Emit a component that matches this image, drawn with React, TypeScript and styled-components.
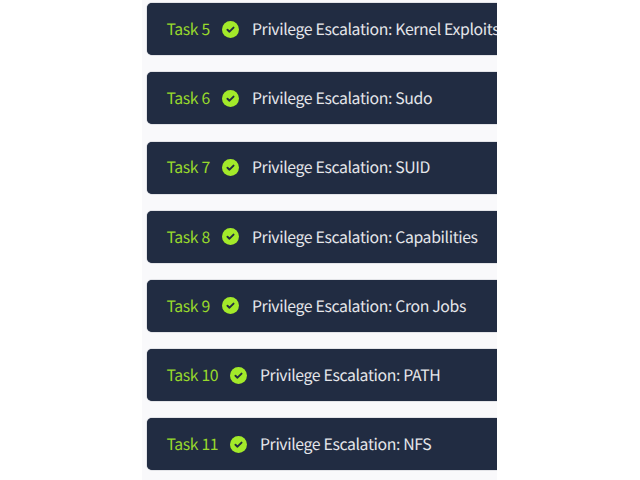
import React from "react";
import styled, { createGlobalStyle } from "styled-components";

const Global = createGlobalStyle`
  * { box-sizing: border-box; }
  body { margin: 0; background: #fff; overflow: hidden; }
`;
const Page = styled.main`
  width: 355px;
  height: 480px;
  margin-left: 142px;
  padding: 3.2px 0 0 5.2px;
  background: #f9f9fb;
  overflow: hidden;
  display: flex;
  flex-direction: column;
  gap: 17.2px;
  font-family: "Noto Sans CJK SC", "Noto Sans CJK JP", sans-serif;
  font-size: 15.8px;
  letter-spacing: -0.36px;
  text-rendering: geometricPrecision;
`;
const Row = styled.article`
  flex: none;
  display: flex;
  align-items: center;
  width: 360px;
  height: 52px;
  padding-left: 19.3px;
  border-radius: 5px;
  background: #212c42;
  box-shadow: 0 0 1px #212c42;
  white-space: nowrap;
`;
const Label = styled.span<{ $w: number }>`
  flex: none;
  width: ${(p) => p.$w}px;
  padding-bottom: 1.2px;
  color: #98d92c;
`;
const Check = styled.svg`
  flex: none;
  width: 17px;
  height: 17px;
  margin-right: 12.8px;
`;
const Title = styled.span`
  flex: none;
  padding-bottom: 1.2px;
  color: #e5e6ea;
`;

const tasks = [
  { id: 5, name: "Kernel Exploits" },
  { id: 6, name: "Sudo" },
  { id: 7, name: "SUID" },
  { id: 8, name: "Capabilities" },
  { id: 9, name: "Cron Jobs" },
  { id: 10, name: "PATH" },
  { id: 11, name: "NFS" },
];

export default function App() {
  return (
    <>
      <Global />
      <Page>
        {tasks.map((t) => (
          <Row key={t.id}>
            <Label $w={t.id > 9 ? 63.7 : 55.7}>Task {t.id}</Label>
            <Check viewBox="0 0 512 512">
              <circle cx="256" cy="256" r="256" fill="#a3ea2a" />
              <path d="M164 262l62 60 122-124" fill="none" stroke="#212c42" strokeWidth="58" strokeLinecap="round" strokeLinejoin="round" />
            </Check>
            <Title>Privilege Escalation: {t.name}</Title>
          </Row>
        ))}
      </Page>
    </>
  );
}
